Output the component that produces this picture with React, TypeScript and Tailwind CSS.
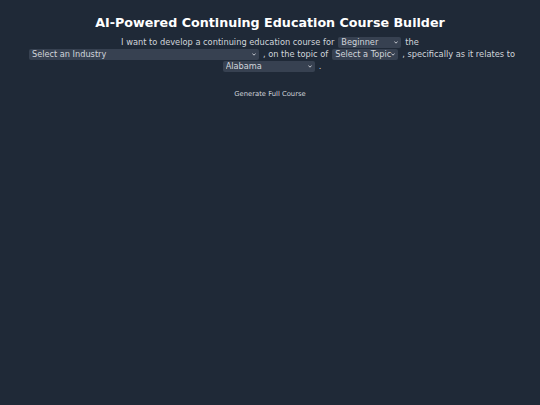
import React from 'react';

// 선택 상자: 네이티브 화살표 대신 작은 셰브론을 겹쳐 그림
function Picker({ width, value, options }: { width: string; value: string; options: string[] }) {
  return (
    <span className={`relative inline-block align-middle mx-[4px] ${width}`}>
      <select
        defaultValue={value}
        className="appearance-none w-full h-[11px] bg-[#374151] text-[#d1d5db] text-[8.2px] leading-[11px] rounded-[2px] pl-[3px] pr-[6px] outline-none block"
      >
        {options.map((o) => (
          <option key={o}>{o}</option>
        ))}
      </select>
      <svg
        className="absolute right-[3px] top-[4px] w-[4px] h-[3px] pointer-events-none"
        viewBox="0 0 4 3"
        fill="none"
        stroke="#d1d5db"
        strokeWidth="0.9"
      >
        <path d="M0.4 0.5 L2 2.2 L3.6 0.5" />
      </svg>
    </span>
  );
}

export default function App() {
  return (
    <div
      className="min-h-[405px] w-full bg-[#1f2937] text-[#d1d5db] px-[20px] pt-[14px]"
      style={{ fontFamily: '"DejaVu Sans", Verdana, sans-serif' }}
    >
      <h1 className="text-center text-white font-bold text-[12.7px] leading-[18px]">
        AI-Powered Continuing Education Course Builder
      </h1>
      <p className="mt-[4px] text-center text-[8.25px] leading-[12px]">
        I want to develop a continuing education course for
        <Picker width="w-[63px]" value="Beginner" options={['Beginner', 'Intermediate', 'Advanced']} />
        the
        <Picker width="w-[230px]" value="Select an Industry" options={['Select an Industry']} />
        , on the topic of
        <Picker width="w-[66px]" value="Select a Topic" options={['Select a Topic']} />
        , specifically as it relates to
        <Picker width="w-[92px]" value="Alabama" options={['Alabama', 'Alaska']} />
        .
      </p>
      <div className="mt-[13px] flex justify-center">
        <button className="text-[6.8px] leading-[10px] text-[#d1d5db] px-2 py-[4px]">
          Generate Full Course
        </button>
      </div>
    </div>
  );
}
